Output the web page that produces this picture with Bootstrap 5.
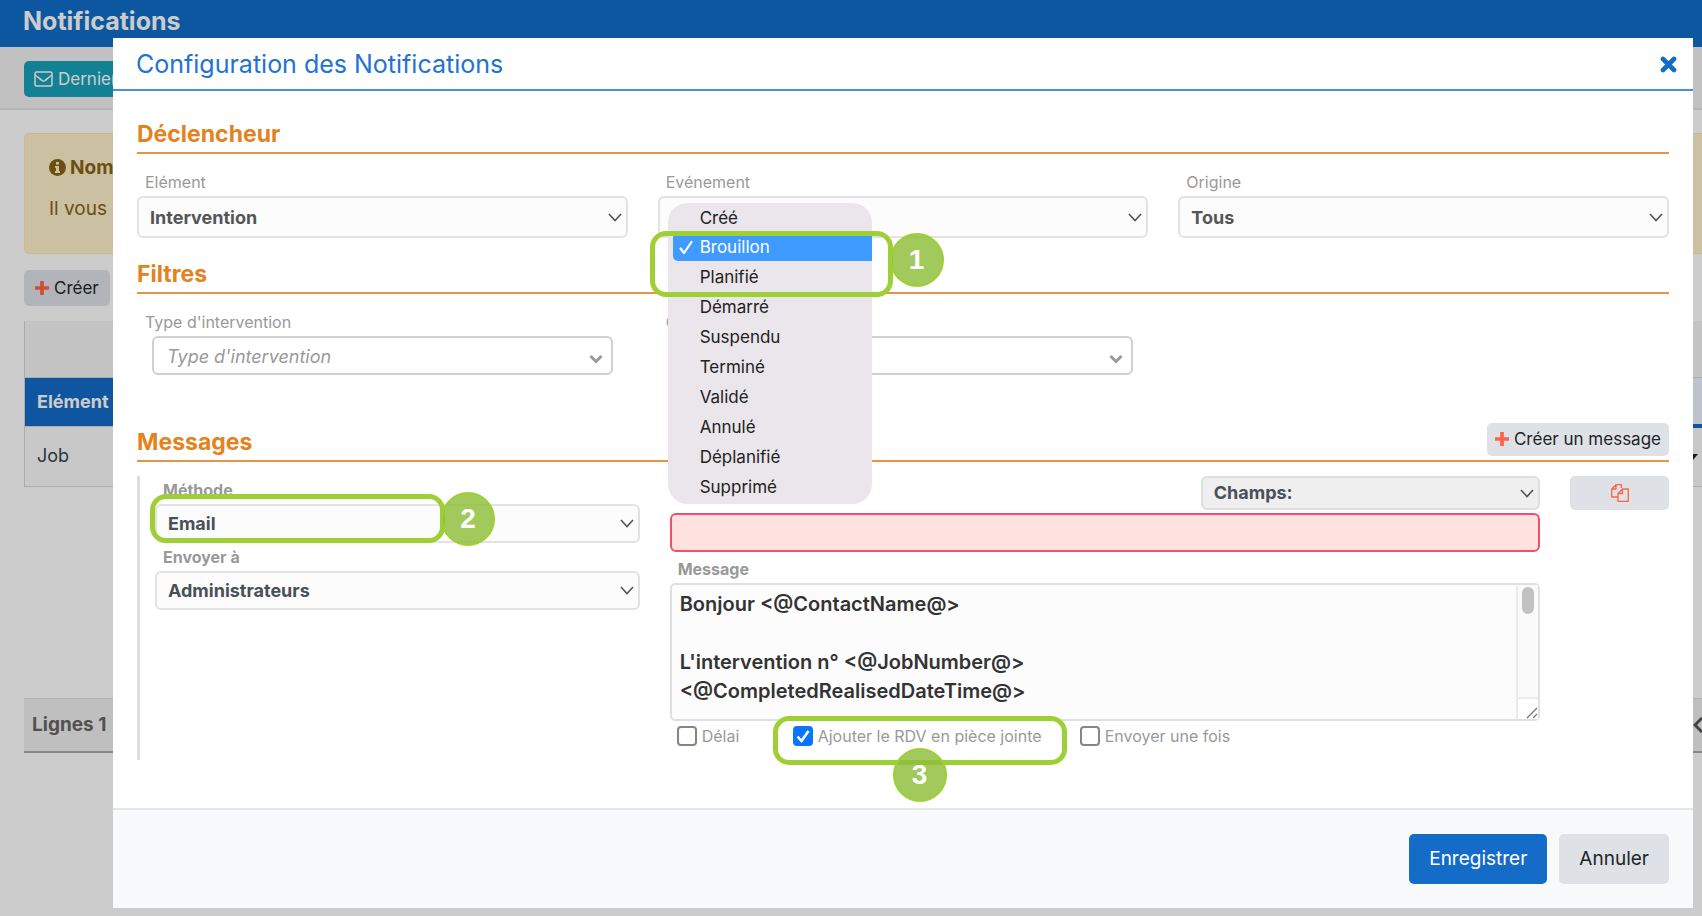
<!DOCTYPE html>
<html lang="fr">
<head>
<meta charset="utf-8">
<meta name="viewport" content="width=device-width, initial-scale=1">
<title>Notifications</title>
<link href="https://cdn.jsdelivr.net/npm/bootstrap@5.3.0/dist/css/bootstrap.min.css" rel="stylesheet">
<style>
  :root { --brand: #146bc8; --orange: #e48220; --mark-line: #9ed035; }
  body { font-family: Inter, "Liberation Sans", sans-serif; font-size: 17px; line-height: 24px; background: #fff; color: #343a40; overflow: hidden; min-height: 100vh; }
  svg { flex: none; display: block; }

  /* page behind the dialog */
  .page-title { background: #116dc9; color: #fff; font-size: 25px; font-weight: 700; line-height: 30px; padding: 6px 23px 11px; margin: 0; }
  .toolbar { background: #f2f2f2; border-bottom: 2px solid #e4e4e4; padding: 14px 24px 11px; }
  .btn { font-family: inherit; --bs-btn-font-size: 17px; --bs-btn-line-height: 24px; --bs-btn-border-radius: 5px; }
  .btn-mail { background: #17a2b8; color: #fff; padding: 6px 10px; border: 0; white-space: nowrap; gap: 5px; }
  .btn-soft, .btn-soft:hover { background: #dee2e6; color: #212529; border: 0; white-space: nowrap; gap: 5px; }
  .btn-create { padding: 6px 11px; }
  .content-area { padding: 23px 0 0 24px; }
  .notice { background: #fff1cc; border: 1px solid #ffe8ad; border-right: 0; border-radius: 5px 0 0 5px; color: #856414; font-size: 19px; line-height: 25px; height: 121px; padding: 21px 24px; }
  .grid-list { margin: 15px 0 0; font-size: 18px; --bs-table-bg: transparent; }
  .grid-list > :not(caption) > * > * { padding: 0 12px; vertical-align: middle; border-bottom: 1px solid #d4d9de; border-left: 1px solid #d4d9de; }
  .grid-list .row-blank { height: 56px; background: #f5f5f5; }
  .grid-list .row-head { height: 49px; }
  .grid-list .row-head th { background: var(--brand); color: #fff; font-weight: 700; }
  .grid-list .row-head th:last-child { background: #eef3ff; border-bottom: 4px solid var(--brand); }
  .grid-list .row-item { height: 60px; background: #fafafa; }
  .grid-list td { color: #33474b; }
  .grid-list > :not(caption) > * > .narrow { width: 9px; padding: 0; border-left: 0; }
  .list-total { margin-top: 211px; height: 55px; background: #efefef; border-top: 1px solid #ddd; border-bottom: 2px solid #aaa; font-size: 19px; font-weight: 700; color: #666; padding-left: 8px; }

  /* dialog */
  .veil { background: rgba(0,0,0,.2); }
  .modal-dialog.wide { max-width: none; margin: 38px 9px 8px 113px; }
  .modal-content { border: 0; border-radius: 0; color: inherit; }
  .modal-header { border-bottom: 2px solid #4b8fdb; border-radius: 0; padding: 10px 16px 9px 23px; }
  .modal-title { color: #2273d1; font-size: 25px; font-weight: 400; line-height: 32px; }
  .btn-x { border: 0; background: none; padding: 0; }
  .modal-body { padding: 29px 24px 48px; }
  .modal-footer { background: #f8f9fb; border-top: 2px solid #e3e7eb; border-radius: 0; padding: 24px; gap: 12px; }
  .modal-footer > * { margin: 0; }
  .modal-footer .btn { font-size: 19px; line-height: 24px; padding: 13px 20px; border: 0; }
  .btn-save, .btn-save:hover { background: var(--brand); color: #fff; }
  .section-head { border-bottom: 2px solid #e59447; padding-bottom: 4px; }
  .section-head h2 { color: var(--orange); font-size: 23px; font-weight: 700; line-height: 28px; margin: 0; }
  .section-head.filters { margin-top: 22px; }
  .section-head.messages { margin-top: 48px; }
  .btn-message { padding: 4px 8px 5px; }
  .row { --bs-gutter-x: 30px; }
  .fields { padding-top: 16px; }
  .field-label { display: block; font-size: 16px; line-height: 24px; color: #999; padding-left: 8px; margin-bottom: 2px; }
  .form-select { background-color: #fcfcfc; border: 2px solid #e2e2e2; border-radius: 6px; color: #555; font-size: 18px; font-weight: 700; line-height: 24px; height: 42px; padding: 1px 36px 0 11px;
    background-image: url("data:image/svg+xml,%3Csvg xmlns='http://www.w3.org/2000/svg' viewBox='0 0 14 9'%3E%3Cpath d='M1 1l6 6.500 6-6.500' fill='none' stroke='%23555' stroke-width='1.600'/%3E%3C/svg%3E"); background-size: 14px 9px; background-position: right 4px center; }
  .tag-box { display: grid; }
  .tag-input { width: auto; border: 2px solid #d0d0d0; border-radius: 6px; height: 39px; font-size: 18px; padding: 2px 13px 0; margin: 0 15px;
    background: #fff url("data:image/svg+xml,%3Csvg xmlns='http://www.w3.org/2000/svg' viewBox='0 0 14 10'%3E%3Cpath d='M1.500 2l5.500 5.500 5.500-5.500' fill='none' stroke='%23999' stroke-width='3'/%3E%3C/svg%3E") no-repeat right 8px top 16px / 14px 10px; }
  .tag-input::placeholder { color: #999; font-style: italic; }
  .message-block { border-left: 3px solid #ddd; margin-top: 14px; padding-bottom: 12px; }
  .message-block > .row { margin-left: 0; }
  .message-block .field-label { font-weight: 700; }
  .message-block .form-select { height: 39px; color: #495057; }
  .message-block .form-select.pick-field { width: 39%; height: 34px; padding-top: 0; background-color: #efefef; border-color: #dedede; margin-left: auto; }
  .recipient { padding-top: 2px; }
  .method-box { margin-bottom: 2px; }
  .subject { height: 39px; background: #ffe2df; border: 2px solid #f0506e; border-radius: 6px; margin: 3px 0 5px; }
  .body-text { height: 138px; resize: none; overflow: hidden; background: #fcfcfc; border: 2px solid #e0e0e0; border-radius: 5px; color: #333; font-size: 20px; font-weight: 600; line-height: 29px; padding: 5px 30px 4px 8px; }
  .scroll-rail { top: 2px; right: 2px; bottom: 2px; width: 22px; border-left: 2px solid #ebebeb; background: #fafafa; pointer-events: none; }
  .scroll-thumb { width: 12px; height: 27px; border-radius: 6px; background: #c1c1c1; margin: 2px 0 0 4px; }
  .scroll-corner { height: 22px; border-top: 2px solid #ebebeb; background: #fff; }
  .options { padding: 3px 0 0 7px; font-size: 16px; color: #999; }
  .options > div { gap: 5px; }
  .options .opt-delay { min-width: 116px; }
  .options .opt-attach { min-width: 287px; }
  .options .form-check-input { width: 20px; height: 20px; margin: 0; border: 2px solid #858585; border-radius: 4px; }
  .options .form-check-input:checked { border-color: #0a75ff; background: #0a75ff url("data:image/svg+xml,%3Csvg xmlns='http://www.w3.org/2000/svg' viewBox='0 0 16 16'%3E%3Cpath d='M2.500 8.500l4 4.500L13.500 3' fill='none' stroke='%23fff' stroke-width='2.600'/%3E%3C/svg%3E") center / 16px no-repeat; }

  /* open list */
  .choices { left: 10px; top: 33px; width: 204px; z-index: 2; background: #eae6eb; border-radius: 20px; color: #222; padding-bottom: 2px; }
  .choices li { line-height: 30px; padding-left: 32px; }
  .choices .picked { background: #3f9bff; color: #fff; margin: 0 0 1px 5px; padding-left: 6px; gap: 6px; line-height: 28px; border-radius: 5px 0 0 5px; }

  /* numbered callouts */
  .callout-box { border: 5px solid var(--mark-line); border-radius: 16px; pointer-events: none; z-index: 3; }
  .callout-no { width: 54px; height: 54px; border-radius: 50%; border: 2px solid var(--mark-line); background: rgba(140,189,55,.82); color: #fff; font: 700 28px/50px "Liberation Sans", sans-serif; text-align: center; }
  .box-one { left: -18px; top: 28px; width: 243px; height: 66px; }
  .box-one .callout-no { left: 235px; top: -3px; }
  .box-two { left: -5px; top: -10px; width: 295px; height: 49px; }
  .box-two .callout-no { left: 286px; top: -7px; }
  .box-three { left: -20px; top: -8px; width: 294px; height: 49px; }
  .box-three .callout-no { left: 115px; top: 27px; }
</style>
</head>
<body>

<div class="page" aria-hidden="true">
  <h1 class="page-title">Notifications</h1>
  <div class="toolbar">
    <button type="button" class="btn btn-mail d-inline-flex align-items-center" tabindex="-1">
      <svg width="19" height="16" viewBox="0 0 19 16" fill="none" stroke="currentColor" stroke-width="1.500"><rect x="1" y="1" width="17" height="14" rx="1.500"/><path d="M1 4c3 2 5 4 7 5.500q1.500 1 3 0C13 8 15 6 18 4"/></svg>
      Derniers
    </button>
  </div>
  <div class="content-area">
    <div class="notice">
      <div class="d-flex align-items-center gap-1 fw-bold mb-3">
        <svg width="17" height="17" viewBox="0 0 17 17"><circle cx="8.500" cy="8.500" r="8.500" fill="currentColor"/><path d="M7 3h3v2.500H7zM6 7h4v5h1v2H6v-2h1V8.700H6z" fill="#fff1cc"/></svg>
        Nom
      </div>
      <div>Il vous</div>
    </div>
    <button type="button" class="btn btn-soft btn-create d-inline-flex align-items-center mt-3" tabindex="-1">
      <svg width="14" height="14" viewBox="0 0 15 15"><path d="M5.500 0h4v5.500H15v4H9.500V15h-4V9.500H0v-4h5.500z" fill="#ff6347"/></svg>
      Créer
    </button>
    <table class="table grid-list">
      <tbody>
        <tr class="row-blank"><td></td><td class="narrow"></td></tr>
        <tr class="row-head"><th scope="col">Elément</th><th class="narrow"></th></tr>
        <tr class="row-item"><td>Job</td><td class="narrow"><svg width="6" height="6" viewBox="0 0 6 6"><path d="M0 0h5L0 6z" fill="#222"/></svg></td></tr>
      </tbody>
    </table>
    <div class="list-total d-flex align-items-center justify-content-between">
      <span>Lignes 1</span>
      <svg width="9" height="16" viewBox="0 0 9 16" fill="none" stroke="#555" stroke-width="3"><path d="M9 1L2 8l7 7"/></svg>
    </div>
  </div>
</div>

<div class="modal d-block veil" role="dialog" aria-labelledby="dlgTitle">
  <div class="modal-dialog wide">
    <form class="modal-content">
      <div class="modal-header">
        <h1 class="modal-title" id="dlgTitle">Configuration des Notifications</h1>
        <button type="button" class="btn-x" aria-label="Fermer">
          <svg width="17" height="17" viewBox="0 0 17 17"><path d="M3 3l11 11M14 3L3 14" stroke="#146bc8" stroke-width="4.600" stroke-linecap="round"/></svg>
        </button>
      </div>

      <div class="modal-body">
        <div class="section-head"><h2>Déclencheur</h2></div>
        <div class="row fields">
          <div class="col-4">
            <label class="field-label" for="element">Elément</label>
            <select class="form-select" id="element"><option>Intervention</option></select>
          </div>
          <div class="col-4">
            <div class="position-relative">
              <label class="field-label" for="event">Evénement</label>
              <select class="form-select" id="event"><option>Brouillon</option></select>
              <ul class="choices list-unstyled position-absolute mb-0" role="listbox" aria-label="Evénement">
                <li role="option">Créé</li>
                <li role="option" aria-selected="true" class="picked d-flex align-items-center">
                  <svg width="15" height="15" viewBox="0 0 15 15"><path d="M1.500 8.500l3.500 4.500L12.500 2" fill="none" stroke="#fff" stroke-width="2.200" stroke-linecap="round" stroke-linejoin="round"/></svg>
                  <span>Brouillon</span>
                </li>
                <li role="option">Planifié</li>
                <li role="option">Démarré</li>
                <li role="option">Suspendu</li>
                <li role="option">Terminé</li>
                <li role="option">Validé</li>
                <li role="option">Annulé</li>
                <li role="option">Déplanifié</li>
                <li role="option">Supprimé</li>
                <li role="presentation" class="callout-box box-one position-absolute p-0"><div class="callout-no position-absolute">1</div></li>
              </ul>
            </div>
          </div>
          <div class="col-4">
            <label class="field-label" for="origin">Origine</label>
            <select class="form-select" id="origin"><option>Tous</option></select>
          </div>
        </div>

        <div class="section-head filters"><h2>Filtres</h2></div>
        <div class="row fields">
          <div class="col-4 tag-box">
            <label class="field-label" for="kind">Type d'intervention</label>
            <input type="text" class="tag-input" id="kind" placeholder="Type d'intervention">
          </div>
          <div class="col-4 tag-box">
            <label class="field-label" for="client">Client</label>
            <input type="text" class="tag-input" id="client">
          </div>
        </div>

        <div class="section-head messages d-flex justify-content-between align-items-end">
          <h2>Messages</h2>
          <button type="button" class="btn btn-soft btn-message d-flex align-items-center">
            <svg width="14" height="14" viewBox="0 0 15 15"><path d="M5.500 0h4v5.500H15v4H9.500V15h-4V9.500H0v-4h5.500z" fill="#ff6347"/></svg>
            Créer un message
          </button>
        </div>

        <div class="message-block">
          <div class="row">
            <div class="col-4 recipient">
              <label class="field-label" for="method">Méthode</label>
              <div class="position-relative method-box">
                <select class="form-select" id="method"><option>Email</option></select>
                <div class="callout-box box-two position-absolute"><div class="callout-no position-absolute">2</div></div>
              </div>
              <label class="field-label" for="target">Envoyer à</label>
              <select class="form-select" id="target"><option>Administrateurs</option></select>
            </div>
            <div class="col-7">
              <select class="form-select pick-field" aria-label="Champs"><option>Champs:</option></select>
              <input type="text" class="subject d-block w-100" aria-label="Sujet">
              <label class="field-label" for="body">Message</label>
              <div class="position-relative">
                <textarea class="body-text d-block w-100" id="body">Bonjour &lt;@ContactName@&gt;

L'intervention n° &lt;@JobNumber@&gt;
&lt;@CompletedRealisedDateTime@&gt;</textarea>
                <div class="scroll-rail position-absolute d-flex flex-column justify-content-between" aria-hidden="true">
                  <div class="scroll-thumb"></div>
                  <div class="scroll-corner d-flex justify-content-end align-items-end">
                    <svg width="12" height="12" viewBox="0 0 12 12" stroke="#777" stroke-width="1.300"><path d="M1 11L11 1M7 11l4-4"/></svg>
                  </div>
                </div>
              </div>
              <div class="options d-flex align-items-center">
                <div class="opt-delay d-flex align-items-center">
                  <input class="form-check-input" type="checkbox" id="delay"><label for="delay">Délai</label>
                </div>
                <div class="opt-attach d-flex align-items-center position-relative">
                  <input class="form-check-input" type="checkbox" id="attach" checked><label for="attach">Ajouter le RDV en pièce jointe</label>
                  <div class="callout-box box-three position-absolute"><div class="callout-no position-absolute">3</div></div>
                </div>
                <div class="d-flex align-items-center">
                  <input class="form-check-input" type="checkbox" id="once"><label for="once">Envoyer une fois</label>
                </div>
              </div>
            </div>
            <div class="col-1">
              <button type="button" class="btn btn-soft w-100 py-2 d-flex justify-content-center" aria-label="Dupliquer">
                <svg width="18" height="18" viewBox="0 0 18 18" fill="none" stroke="#ff6347" stroke-width="1.300" stroke-linejoin="round"><path d="M7 13H.7V5L5 .7h5.300V4M5 .7V5H.7M11.500 5h5.800v12.300H7V9.500L11.500 5v4.500H7M7 9V13"/></svg>
              </button>
            </div>
          </div>
        </div>
      </div>

      <div class="modal-footer">
        <button type="button" class="btn btn-save">Enregistrer</button>
        <button type="button" class="btn btn-soft">Annuler</button>
      </div>
    </form>
  </div>
</div>
<script src="https://cdn.jsdelivr.net/npm/bootstrap@5.3.0/dist/js/bootstrap.bundle.min.js"></script>
</body>
</html>
